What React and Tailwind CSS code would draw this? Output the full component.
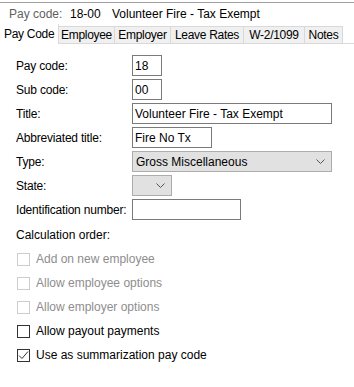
import React from 'react'

const tabs = [
  { label: 'Employee', w: 'w-[56px]' },
  { label: 'Employer', w: 'w-[56px]' },
  { label: 'Leave Rates', w: 'w-[73px]' },
  { label: 'W-2/1099', w: 'w-[61px]' },
  { label: 'Notes', w: 'w-[38px]' },
]

function Field({ label, children }) {
  return (
    <div className="flex items-center h-[21px] mb-[3px]">
      <div className="w-[116px] shrink-0 whitespace-nowrap tracking-[-0.2px]">{label}</div>
      {children}
    </div>
  )
}

function TextBox({ value = '', width }) {
  return (
    <div className={`h-[21px] border border-[#7a7a7a] bg-white px-[2px] flex items-center whitespace-nowrap ${width}`}>
      {value}
    </div>
  )
}

function Select({ value = '', width }) {
  return (
    <div className={`h-[21px] border border-[#adadad] bg-[#e1e1e1] pl-[3px] pr-[6px] flex items-center justify-between ${width}`}>
      <span>{value}</span>
      <svg width="9" height="6" viewBox="0 0 9 6" className="ml-auto">
        <path d="M0.5 0.5 L4.5 4.5 L8.5 0.5" fill="none" stroke="#555" strokeWidth="1" />
      </svg>
    </div>
  )
}

function Check({ label, checked = false, disabled = false }) {
  return (
    <div className="flex items-center h-[24px]">
      <div className={`w-[13px] h-[13px] border bg-white flex items-center justify-center ${disabled ? 'border-[#cccccc]' : 'border-[#333333]'}`}>
        {checked && (
          <svg width="11" height="11" viewBox="0 0 11 11">
            <path d="M1 5.5 L4 8.5 L10 1.5" fill="none" stroke="#333" strokeWidth="1" />
          </svg>
        )}
      </div>
      <span className={`ml-[6px] ${disabled ? 'text-[#8d8d8d]' : 'text-black'}`}>{label}</span>
    </div>
  )
}

export default function App() {
  return (
    <div className="w-[354px] h-[387px] bg-white text-[12px] text-black overflow-hidden" style={{ fontFamily: '"Liberation Sans", Arial, sans-serif' }}>
      <div className="h-[2px]" />
      <div className="h-px bg-[#a0a0a0]" />
      <div className="flex items-center h-[21px] pl-[9px] whitespace-nowrap">
        <span className="text-[#5f5f5f] w-[61px]">Pay code:</span>
        <span className="w-[42px]">18-00</span>
        <span>Volunteer Fire - Tax Exempt</span>
      </div>
      <div className="flex items-end h-[20px] whitespace-nowrap tracking-[-0.3px]">
        <div className="h-[20px] w-[59px] bg-white border-r border-[#d9d9d9] flex items-center pl-[4px] relative z-10">Pay Code</div>
        {tabs.map((t) => (
          <div key={t.label} className={`h-[18px] bg-[#f0f0f0] border border-l-0 border-[#d9d9d9] flex items-center justify-center ${t.w}`}>{t.label}</div>
        ))}
        <div className="flex-1 border-b border-[#d9d9d9]" />
      </div>
      <div className="pl-[16px] pt-[11px]">
        <Field label="Pay code:"><TextBox value="18" width="w-[30px]" /></Field>
        <Field label="Sub code:"><TextBox value="00" width="w-[30px]" /></Field>
        <Field label="Title:"><TextBox value="Volunteer Fire - Tax Exempt" width="w-[200px]" /></Field>
        <Field label="Abbreviated title:"><TextBox value="Fire No Tx" width="w-[80px]" /></Field>
        <Field label="Type:"><Select value="Gross Miscellaneous" width="w-[200px]" /></Field>
        <Field label="State:"><Select width="w-[40px]" /></Field>
        <Field label="Identification number:"><TextBox width="w-[109px]" /></Field>
        <div className="h-[24px] flex items-center">Calculation order:</div>
        <div className="pl-[1px]">
          <Check label="Add on new employee" disabled />
          <Check label="Allow employee options" disabled />
          <Check label="Allow employer options" disabled />
          <Check label="Allow payout payments" />
          <Check label="Use as summarization pay code" checked />
        </div>
      </div>
    </div>
  )
}
